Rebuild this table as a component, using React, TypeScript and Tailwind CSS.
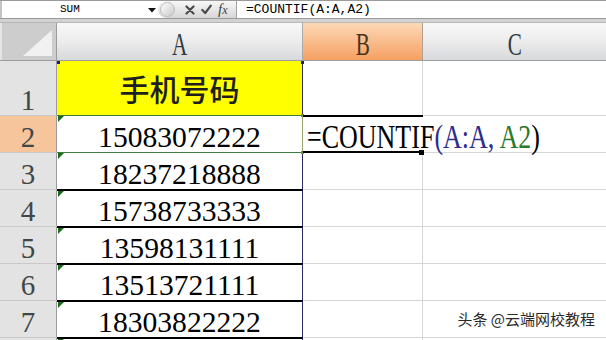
import React from "react";

const serif = '"Liberation Serif", "Times New Roman", serif';
const mono = '"Liberation Mono", "Courier New", monospace';
const cjk = '"Noto Sans CJK SC", "Noto Sans", sans-serif';

const nums = ["15083072222", "18237218888", "15738733333", "13598131111", "13513721111", "18303822222", ""];

function Tri() {
  return (
    <svg className="absolute left-[1px] top-[0px] z-10" width="6" height="6" viewBox="0 0 6 6">
      <polygon points="0,0 6,0 0,6" fill="#1d6a1d" />
    </svg>
  );
}

function RowHead({ n, active }: { n: number | string; active?: boolean }) {
  return (
    <div
      className={`w-[57px] shrink-0 border-r border-[#9b9b9b] flex items-end justify-center text-[29px] leading-[30px] text-[#3f4747] ${
        active ? "bg-[#f6c59b]" : "bg-[#e3e3e3]"
      }`}
      style={{ fontFamily: serif }}
    >
      {n}
    </div>
  );
}

export default function App() {
  return (
    <div className="relative w-[606px] h-[340px] overflow-hidden bg-white">
      {/* formula bar */}
      <div className="flex h-[19px] border-t border-b border-[#9a9a9a] bg-white">
        <div className="relative w-[158px] shrink-0 flex items-center border-l-2 border-[#c4c4c4]">
          <span className="pl-[58px] text-[11px] leading-none text-black" style={{ fontFamily: mono }}>
            SUM
          </span>
          <svg className="absolute left-[146px] top-[7px]" width="8" height="5" viewBox="0 0 8 5">
            <polygon points="0,0 8,0 4,4.5" fill="#111" />
          </svg>
        </div>
        <div className="relative w-[79px] shrink-0 rounded-l-full bg-gradient-to-b from-[#f8f8f8] to-[#d6d6d6] border-r border-[#a3a3a3] flex items-center">
          <div className="ml-[2px] w-[15px] h-[15px] rounded-full bg-gradient-to-br from-[#ffffff] to-[#c9c9c9] border border-[#bdbdbd]" />
          <svg className="ml-[10px]" width="10" height="10" viewBox="0 0 10 10">
            <path d="M1.5 1.5 L8.5 8.5 M8.5 1.5 L1.5 8.5" stroke="#4b4b4b" strokeWidth="2.2" strokeLinecap="round" />
          </svg>
          <svg className="ml-[6px]" width="11" height="11" viewBox="0 0 11 11">
            <path d="M1.3 6 L4.2 9 L9.8 1.6" stroke="#4b4b4b" strokeWidth="2.2" fill="none" strokeLinecap="round" strokeLinejoin="round" />
          </svg>
          <span className="ml-[6px] italic text-[15px] leading-none text-[#444]" style={{ fontFamily: serif }}>
            f<span className="text-[12px]">x</span>
          </span>
        </div>
        <div className="flex-1 flex items-center pl-[9px] text-[13px] leading-none text-black" style={{ fontFamily: mono }}>
          =COUNTIF(A:A,A2)
        </div>
      </div>
      <div className="h-[4px] bg-[#d2d2d2] border-b border-[#b8b8b8]" />

      {/* column header */}
      <div className="flex h-[38px] border-b border-[#9e9e9e]">
        <div className="relative w-[57px] shrink-0 bg-[#cdcdcd] border-r border-[#9b9b9b] border-l-2 border-l-[#e4e4e4]">
          <svg className="absolute left-0 top-0" width="57" height="38" viewBox="0 0 57 38">
            <polygon points="21,33 50,7 50,33" fill="#f1f1f1" />
          </svg>
        </div>
        <div
          className="w-[246px] shrink-0 border-r border-[#a9a9a9] bg-gradient-to-b from-[#f8f8f8] via-[#ececec] to-[#d8d9db] flex items-center justify-center pt-[4px] text-[32px] leading-none text-[#2f3c42]"
          style={{ fontFamily: serif }}
        >
          <span className="inline-block scale-x-[0.66]">A</span>
        </div>
        <div
          className="w-[120px] shrink-0 border-r border-[#b0a090] bg-gradient-to-b from-[#fcd8b6] to-[#f5a061] flex items-center justify-center pt-[4px] text-[32px] leading-none text-[#4a3420]"
          style={{ fontFamily: serif }}
        >
          <span className="inline-block scale-x-[0.66]">B</span>
        </div>
        <div
          className="flex-1 bg-gradient-to-b from-[#f8f8f8] via-[#ececec] to-[#d8d9db] flex items-center justify-center pt-[4px] text-[32px] leading-none text-[#2f3c42]"
          style={{ fontFamily: serif }}
        >
          <span className="inline-block scale-x-[0.66]">C</span>
        </div>
      </div>

      {/* row 1 */}
      <div className="flex h-[54px]">
        <RowHead n={1} />
        <div className="relative w-[246px] shrink-0 bg-[#ffff00] border-r border-[#2b2a6e] flex items-center justify-center">
          <span className="text-[30px] leading-[30px] font-medium text-[#1e1e1e]" style={{ fontFamily: cjk }}>
            手机号码
          </span>
          <div className="absolute left-0 top-0 w-[3px] h-[3px] bg-[#1d1d7a]" />
          <div className="absolute right-[-2px] top-0 w-[3px] h-[3px] bg-[#1d1d7a]" />
        </div>
        <div className="w-[120px] shrink-0 border-r border-[#d6d6d6]" />
        <div className="flex-1" />
      </div>

      {/* data rows */}
      {nums.map((v, i) => {
        const r = i + 2;
        const isA2 = r === 2;
        const topA =
          r === 2 || r === 3 ? "border-t border-t-[#3d7d3d]" : "border-t-2 border-t-black";
        return (
          <div key={r} className="flex h-[37px]">
            <div className="w-[57px] shrink-0 flex border-t border-t-[#c9c9c9]">
              <RowHead n={r <= 7 ? r : ""} active={isA2} />
            </div>
            <div
              className={`relative w-[246px] shrink-0 ${topA} border-r ${
                isA2 ? "border-r-[#9aa46a]" : "border-r-[#2b2a6e]"
              } flex items-end justify-center text-[29.6px] leading-[30px] text-black`}
              style={{ fontFamily: serif }}
            >
              <Tri />
              {v}
              {isA2 && (
                <>
                  <div className="absolute right-[-2px] top-[-2px] w-[3px] h-[3px] bg-[#7c8a52] z-10" />
                  <div className="absolute right-[-2px] bottom-[-2px] w-[3px] h-[3px] bg-[#7c8a52] z-10" />
                </>
              )}
            </div>
            {isA2 ? (
              <div className="relative w-[120px] shrink-0 border-t-2 border-t-black z-10">
                <span
                  className="absolute left-[4px] top-[3px] whitespace-nowrap text-[34px] leading-[34px] origin-left scale-x-[0.765] inline-block"
                  style={{ fontFamily: serif }}
                >
                  <span className="text-black">=COUNTIF</span>
                  <span className="text-[#2c2c8c]">(A:A, </span>
                  <span className="text-[#2a7a2e]">A2</span>
                  <span className="text-black">)</span>
                </span>
                <div className="absolute left-0 bottom-[-1px] w-[116px] h-[2px] bg-black" />
                <div className="absolute left-[116px] bottom-[-3px] w-[5px] h-[5px] bg-black" />
              </div>
            ) : (
              <div className="w-[120px] shrink-0 border-t border-r border-[#d6d6d6]" />
            )}
            <div className="flex-1 border-t border-[#d6d6d6]" />
          </div>
        );
      })}

      {/* watermark */}
      <div
        className="absolute right-[11px] top-[311px] text-[15px] leading-none text-[#2b2b2b] whitespace-nowrap"
        style={{ fontFamily: cjk, textShadow: "0 0 2px #fff, 0 0 2px #fff" }}
      >
        头条 @云端网校教程
      </div>
    </div>
  );
}
